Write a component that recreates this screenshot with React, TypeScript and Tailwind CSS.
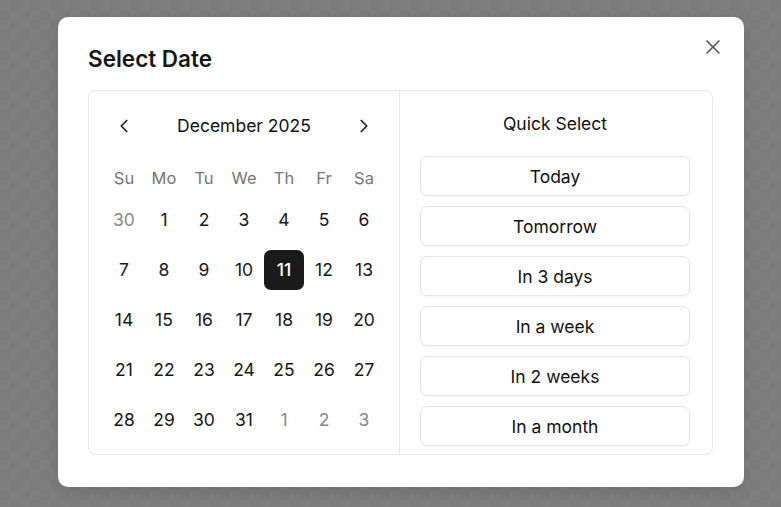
import { ChevronLeft, ChevronRight, X } from "lucide-react";

type Day = { n: number; muted?: boolean };

const weekdays = ["Su", "Mo", "Tu", "We", "Th", "Fr", "Sa"];

const buildWeeks = (): Day[][] => {
    const days: Day[] = [{ n: 30, muted: true }];
    for (let i = 1; i <= 31; i++) days.push({ n: i });
    for (let i = 1; i <= 3; i++) days.push({ n: i, muted: true });
    const weeks: Day[][] = [];
    for (let i = 0; i < days.length; i += 7) weeks.push(days.slice(i, i + 7));
    return weeks;
}

const quickOptions = ["Today", "Tomorrow", "In 3 days", "In a week", "In 2 weeks", "In a month"];

const Calendar = () => {
    const weeks = buildWeeks();
    return (
        <div className="w-[311px] shrink-0 border-r border-[#e7e7e7] px-[15px] pt-[15px] pb-[14px]">
            <div className="flex h-10 items-center justify-between">
                <button className="flex size-10 items-center justify-center text-[#1a1a1a]">
                    <ChevronLeft size={22} strokeWidth={1.8} />
                </button>
                <span className="text-[17.5px] text-[#111]">December 2025</span>
                <button className="flex size-10 items-center justify-center text-[#1a1a1a]">
                    <ChevronRight size={22} strokeWidth={1.8} />
                </button>
            </div>
            <div className="mt-3 grid h-10 grid-cols-7">
                {weekdays.map((d) => (
                    <span key={d} className="flex items-center justify-center text-[16.5px] text-[#777]">{d}</span>
                ))}
            </div>
            <div className="mt-[2px] flex flex-col gap-[10px]">
                {weeks.map((week, wi) => (
                    <div key={wi} className="grid grid-cols-7">
                        {week.map((d, di) => {
                            const selected = !d.muted && d.n === 11;
                            return (
                                <span
                                    key={di}
                                    className={
                                        selected
                                            ? "flex h-10 items-center justify-center rounded-[7px] bg-[#1a1a1a] text-[17.5px] font-medium text-white"
                                            : d.muted
                                                ? "flex h-10 items-center justify-center text-[17.5px] text-[#888]"
                                                : "flex h-10 items-center justify-center text-[17.5px] text-[#171717]"
                                    }
                                >
                                    {d.n}
                                </span>
                            );
                        })}
                    </div>
                ))}
            </div>
        </div>
    )
}

const QuickSelect = () => (
    <div className="flex flex-1 flex-col pl-5 pt-[21px]">
        <p className="h-6 w-[270px] text-center text-[17.5px] leading-6 text-[#111]">Quick Select</p>
        <div className="mt-5 flex w-[270px] flex-col gap-[10px]">
            {quickOptions.map((o) => (
                <button
                    key={o}
                    className="h-10 rounded-[7px] border border-[#e5e5e5] bg-white pt-[2px] text-[17.5px] text-[#111] shadow-[0_1px_2px_rgba(0,0,0,0.04)]"
                >
                    {o}
                </button>
            ))}
        </div>
    </div>
)

export default function App() {
    return (
        <div
            className="h-[507px] w-full bg-[repeating-conic-gradient(#7c7c7c_0%_25%,#7f7f7f_0%_50%)] bg-[length:20px_20px] pl-[58px] pt-[17px] font-['Inter','Liberation_Sans',sans-serif]"
        >
            <div className="relative w-[686px] rounded-[10px] bg-white pl-[30px] pr-[31px] pt-[27px] pb-[32px] shadow-[0_4px_16px_rgba(0,0,0,0.12)]">
                <button className="absolute right-[19px] top-[18px] flex size-6 items-center justify-center text-[#555]">
                    <X size={24} strokeWidth={1.6} />
                </button>
                <h2 className="h-[30px] text-[22.5px] font-semibold leading-[30px] text-[#171717]">Select Date</h2>
                <div className="mt-4 flex rounded-[8px] border border-[#e7e7e7]">
                    <Calendar />
                    <QuickSelect />
                </div>
            </div>
        </div>
    )
}
